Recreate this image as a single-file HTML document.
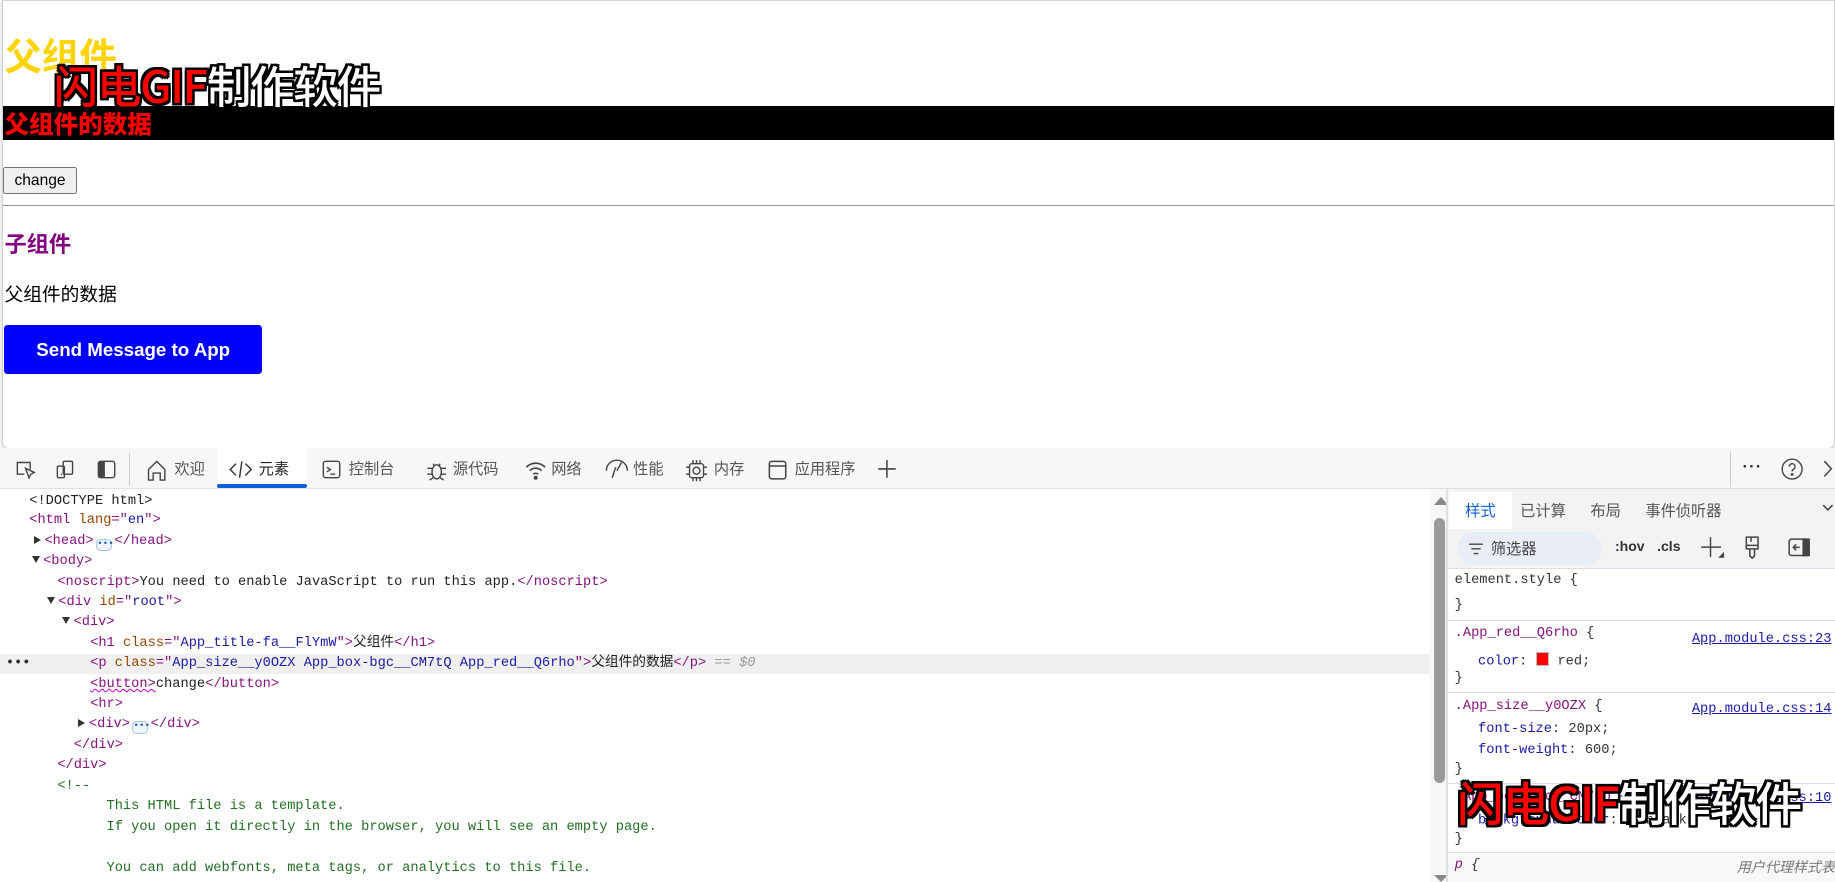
<!DOCTYPE html>
<html><head><meta charset="utf-8">
<style>
html,body{margin:0;padding:0;}
body{width:1568px;height:754px;zoom:1.17028;overflow:hidden;position:relative;background:#f7f7f7;font-family:"Liberation Sans","Noto Sans CJK SC",sans-serif;}
.abs{position:absolute;}
#page{position:absolute;left:2px;top:0;width:1564px;height:382px;background:#fff;border:1px solid #d4d4d4;border-radius:0 0 6px 6px;box-shadow:0 1px 3px rgba(0,0,0,.15);overflow:hidden;}
.wm{position:absolute;font-family:"Noto Sans CJK SC","WenQuanYi Zen Hei",sans-serif;font-weight:500;font-size:38px;line-height:40px;white-space:nowrap;text-shadow:-2px -2px 0 #000,2px -2px 0 #000,-2px 2px 0 #000,2px 2px 0 #000,0 2px 0 #000,0 -2px 0 #000,2px 0 0 #000,-2px 0 0 #000;letter-spacing:-1px;}
.wm .r{color:#f00}.wm .w{color:#fff}
#tb{position:absolute;left:0;top:383px;width:1568px;height:35px;background:#f7f7f7;}
.tab{position:absolute;top:0;height:35px;line-height:35px;font-size:13px;color:#555;font-family:"Noto Sans CJK SC",sans-serif;}
.tab svg{position:absolute;top:9px;}
#el{position:absolute;left:0;top:420px;width:1222px;height:334px;background:#fff;font-family:"Liberation Mono",monospace;font-size:11.7px;}
.ln{position:absolute;white-space:pre;line-height:17px;color:#222;}
.t{color:#881280}.an{color:#994500}.av{color:#1a1aa6}.cm{color:#236e25}
.cj{font-family:"Liberation Mono","Noto Sans CJK SC",monospace;}
.tri{display:inline-block;width:0;height:0;border-left:6px solid #333;border-top:4px solid transparent;border-bottom:4px solid transparent;margin-right:3px;vertical-align:0}
.trid{display:inline-block;width:0;height:0;border-top:6px solid #333;border-left:4px solid transparent;border-right:4px solid transparent;margin-right:3px;vertical-align:1px}
.dots{display:inline-block;width:12px;height:9px;border:1px solid #a8c4e8;border-radius:4px;background:#eef4fc;font-size:8px;line-height:6px;text-align:center;color:#1a5fb4;vertical-align:-1px;margin:0 2px}
#sp{position:absolute;left:1237px;top:418px;width:331px;height:336px;background:#fff;font-family:"Liberation Mono",monospace;font-size:11.7px;}
.rule{position:absolute;left:0;width:331px;border-top:1px solid #d4e0f2;}
.sl{position:absolute;white-space:pre;color:#333;}
.lk{position:absolute;right:3px;color:#1a1aa6;text-decoration:underline;}
</style></head><body>

<div id="page">
  <div class="abs" style="left:1px;top:26px;font-size:32px;font-weight:700;color:#ffd400;font-family:'Noto Sans CJK SC',sans-serif;line-height:40px;">父组件</div>
  <div class="abs" style="left:0;top:90px;width:1564px;height:29px;background:#000;"></div>
  <div class="abs" style="left:1px;top:91px;font-size:21px;font-weight:900;color:#f00;line-height:28px;font-family:'Noto Sans CJK SC',sans-serif;">父组件的数据</div>
  <div class="abs" style="left:0;top:142px;width:61px;height:21px;border:1px solid #767676;border-radius:2px;background:#efefef;font-size:13.3px;line-height:23px;text-align:center;color:#000;">change</div>
  <div class="abs" style="left:0;top:174px;width:1564px;height:0;border-top:1px solid #999;"></div>
  <div class="abs" style="left:1px;top:193px;font-size:19px;font-weight:700;color:#800080;line-height:28px;font-family:'Noto Sans CJK SC',sans-serif;">子组件</div>
  <div class="abs" style="left:1px;top:239px;font-size:16px;color:#000;line-height:22px;font-family:'Noto Sans CJK SC',sans-serif;">父组件的数据</div>
  <div class="abs" style="left:1px;top:277px;width:220px;height:42px;background:#00f;border-radius:3px;color:#fff;font-size:16px;font-weight:700;line-height:42px;text-align:center;">Send Message to App</div>
  <div class="wm" style="left:43px;top:51px;"><span class="r">闪电GIF</span><span class="w">制作软件</span></div>
</div>

<div id="tb">
  <svg class="abs" style="left:13px;top:9px" width="18" height="18" viewBox="0 0 18 18" fill="none" stroke="#444" stroke-width="1.2"><path d="M13 9V3H2v10h6"/><path d="M9 8l3 8 1.5-3 3-1.5z"/></svg>
  <svg class="abs" style="left:47px;top:9px" width="18" height="18" viewBox="0 0 18 18" fill="none" stroke="#444" stroke-width="1.2"><rect x="7" y="2" width="8" height="11" rx="1"/><rect x="2" y="6" width="6" height="10" rx="1"/><path d="M5 13h1"/></svg>
  <svg class="abs" style="left:82px;top:9px" width="18" height="18" viewBox="0 0 18 18" fill="none" stroke="#444" stroke-width="1.2"><rect x="2" y="2" width="14" height="14" rx="2"/><rect x="3" y="3" width="4" height="12" fill="#444"/></svg>
  <div class="abs" style="left:110px;top:4px;width:1px;height:28px;background:#ccc"></div>
  <div class="tab" style="left:124px;"><svg style="left:0" width="20" height="20" viewBox="0 0 20 20" fill="none" stroke="#444" stroke-width="1.2"><path d="M3 9l7-7 7 7v9h-4v-6H7v6H3z"/></svg><span style="margin-left:25px">欢迎</span></div>
  <div class="abs" style="left:185px;top:0;width:77px;height:35px;background:#fff;"></div>
  <div class="abs" style="left:185px;top:31px;width:77px;height:3px;background:#0f5fd7;border-radius:2px"></div>
  <div class="tab" style="left:196px;color:#222"><svg style="left:0" width="20" height="18" viewBox="0 0 20 18" fill="none" stroke="#333" stroke-width="1.2"><path d="M6 4L1 9l5 5M14 4l5 5-5 5M11 2L9 16"/></svg><span style="margin-left:25px">元素</span></div>
  <div class="tab" style="left:274px;"><svg style="left:0" width="18" height="18" viewBox="0 0 18 18" fill="none" stroke="#444" stroke-width="1.2"><rect x="2" y="2" width="14" height="14" rx="2"/><path d="M5 7l3 2-3 2M8 13h4"/></svg><span style="margin-left:24px">控制台</span></div>
  <div class="tab" style="left:363px;"><svg style="left:0" width="20" height="20" viewBox="0 0 20 20" fill="none" stroke="#444" stroke-width="1.2"><ellipse cx="10" cy="11" rx="4" ry="6"/><path d="M7 4l1 2M13 4l-1 2M2 8h4M2 13h4M14 8h4M14 13h4M4 18l3-2M16 18l-3-2"/></svg><span style="margin-left:24px">源代码</span></div>
  <div class="tab" style="left:448px;"><svg style="left:0" width="20" height="18" viewBox="0 0 20 18" fill="none" stroke="#444" stroke-width="1.4"><path d="M2 7a11 11 0 0 1 16 0M5 10a7 7 0 0 1 10 0M8 13a3 3 0 0 1 4 0"/><circle cx="10" cy="16" r="1" fill="#444"/></svg><span style="margin-left:23px">网络</span></div>
  <div class="tab" style="left:516px;"><svg style="left:0" width="22" height="18" viewBox="0 0 22 18" fill="none" stroke="#444" stroke-width="1.2"><path d="M2 10a9 9 0 0 1 18 0"/><path d="M11 10l4-7"/><path d="M7 16l3-9"/></svg><span style="margin-left:25px">性能</span></div>
  <div class="tab" style="left:586px;"><svg style="left:0" width="18" height="20" viewBox="0 0 18 20" fill="none" stroke="#444" stroke-width="1.2"><rect x="3" y="4" width="12" height="12" rx="2"/><circle cx="9" cy="10" r="3"/><path d="M6 1v3M9 1v3M12 1v3M6 16v3M9 16v3M12 16v3M0 7h3M0 13h3M15 7h3M15 13h3"/></svg><span style="margin-left:24px">内存</span></div>
  <div class="tab" style="left:655px;"><svg style="left:0" width="18" height="18" viewBox="0 0 18 18" fill="none" stroke="#444" stroke-width="1.3"><rect x="2" y="2" width="14" height="15" rx="2"/><path d="M2 6h14"/></svg><span style="margin-left:24px">应用程序</span></div>
  <svg class="abs" style="left:749px;top:9px" width="17" height="17" viewBox="0 0 17 17" stroke="#444" stroke-width="1.3"><path d="M8.5 1v15M1 8.5h15"/></svg>
  <div class="abs" style="left:1478px;top:2px;width:1px;height:31px;background:#ccc"></div>
  <div class="abs" style="left:1489px;top:8px;font-size:14px;color:#333;letter-spacing:1px;font-weight:700">···</div>
  <svg class="abs" style="left:1522px;top:8px" width="19" height="19" viewBox="0 0 19 19" fill="none" stroke="#444" stroke-width="1.2"><circle cx="9.5" cy="9.5" r="8.5"/><path d="M7 7.5a2.5 2.5 0 1 1 3.5 2.2c-.8.4-1 1-1 1.8"/><circle cx="9.5" cy="14" r=".6" fill="#444"/></svg>
  <svg class="abs" style="left:1557px;top:10px" width="10" height="15" viewBox="0 0 10 15" fill="none" stroke="#444" stroke-width="1.3"><path d="M2 1l6 6.5L2 14"/></svg>
</div>
<div class="abs" style="left:0;top:417px;width:1568px;height:1px;background:#e0e0e0"></div>
<div class="abs" style="left:0;top:418px;width:1222px;height:2px;background:#fff"></div>

<div id="el">
  <div class="abs" style="left:0;top:139px;width:1222px;height:17px;background:#f0f0f0"></div>
  <div class="ln" style="left:25px;top:0px">&lt;!DOCTYPE html&gt;</div>
  <div class="ln" style="left:25px;top:17px"><span class="t">&lt;html </span><span class="an">lang</span><span class="t">="</span><span class="av">en</span><span class="t">"&gt;</span></div>
  <div class="ln" style="left:29px;top:35px"><span class="tri"></span><span class="t">&lt;head&gt;</span><span class="dots">•••</span><span class="t">&lt;/head&gt;</span></div>
  <div class="ln" style="left:27px;top:52px"><span class="trid"></span><span class="t">&lt;body&gt;</span></div>
  <div class="ln" style="left:49px;top:70px"><span class="t">&lt;noscript&gt;</span>You need to enable JavaScript to run this app.<span class="t">&lt;/noscript&gt;</span></div>
  <div class="ln" style="left:40px;top:87px"><span class="trid"></span><span class="t">&lt;div </span><span class="an">id</span><span class="t">="</span><span class="av">root</span><span class="t">"&gt;</span></div>
  <div class="ln" style="left:53px;top:104px"><span class="trid"></span><span class="t">&lt;div&gt;</span></div>
  <div class="ln cj" style="left:77px;top:122px"><span class="t">&lt;h1 </span><span class="an">class</span><span class="t">="</span><span class="av">App_title-fa__FlYmW</span><span class="t">"&gt;</span>父组件<span class="t">&lt;/h1&gt;</span></div>
  <div class="ln" style="left:5px;top:139px;font-weight:700;color:#333">•••</div>
  <div class="ln cj" style="left:77px;top:139px"><span class="t">&lt;p </span><span class="an">class</span><span class="t">="</span><span class="av">App_size__y0OZX App_box-bgc__CM7tQ App_red__Q6rho</span><span class="t">"&gt;</span>父组件的数据<span class="t">&lt;/p&gt;</span> <span style="color:#999;font-style:italic">== $0</span></div>
  <div class="ln" style="left:77px;top:157px"><span class="t" style="text-decoration:underline wavy #c0c;text-decoration-thickness:1px">&lt;button&gt;</span>change<span class="t">&lt;/button&gt;</span></div>
  <div class="ln" style="left:77px;top:174px"><span class="t">&lt;hr&gt;</span></div>
  <div class="ln" style="left:67px;top:191px"><span class="tri"></span><span class="t">&lt;div&gt;</span><span class="dots">•••</span><span class="t">&lt;/div&gt;</span></div>
  <div class="ln" style="left:63px;top:209px"><span class="t">&lt;/div&gt;</span></div>
  <div class="ln" style="left:49px;top:226px"><span class="t">&lt;/div&gt;</span></div>
  <div class="ln cm" style="left:49px;top:244px">&lt;!--</div>
  <div class="ln cm" style="left:91px;top:261px">This HTML file is a template.</div>
  <div class="ln cm" style="left:91px;top:279px">If you open it directly in the browser, you will see an empty page.</div>
  <div class="ln cm" style="left:91px;top:314px">You can add webfonts, meta tags, or analytics to this file.</div>
</div>

<div class="abs" style="left:1222px;top:418px;width:15px;height:336px;background:#f7f7f7"></div>
<div class="abs" style="left:1225px;top:425px;width:0;height:0;border-left:6px solid transparent;border-right:6px solid transparent;border-bottom:7px solid #888"></div>
<div class="abs" style="left:1225px;top:443px;width:10px;height:226px;background:#9a9a9a;border-radius:5px"></div>
<div class="abs" style="left:1225px;top:748px;width:0;height:0;border-left:6px solid transparent;border-right:6px solid transparent;border-top:6px solid #888"></div>

<div id="sp">
  <div class="abs" style="left:0;top:0;width:331px;height:34px;background:#f3f3f3"></div>
  <div class="abs" style="left:1px;top:2px;width:54px;height:32px;background:#fff"></div>
  <div class="abs" style="left:15px;top:8px;font-size:13px;color:#0f5fd7;font-family:'Noto Sans CJK SC',sans-serif">样式</div>
  <div class="abs" style="left:62px;top:8px;font-size:13px;color:#555;font-family:'Noto Sans CJK SC',sans-serif">已计算</div>
  <div class="abs" style="left:122px;top:8px;font-size:13px;color:#555;font-family:'Noto Sans CJK SC',sans-serif">布局</div>
  <div class="abs" style="left:169px;top:8px;font-size:13px;color:#555;font-family:'Noto Sans CJK SC',sans-serif">事件侦听器</div>
  <svg class="abs" style="left:320px;top:13px" width="10" height="7" viewBox="0 0 10 7" fill="none" stroke="#333" stroke-width="1.2"><path d="M1 1l4 4 4-4"/></svg>
  <div class="abs" style="left:0;top:34px;width:331px;height:33px;background:#f3f3f3;border-bottom:1px solid #d4e0f2"></div>
  <div class="abs" style="left:8px;top:37px;width:124px;height:28px;background:#e9eef6;border-radius:14px"></div>
  <svg class="abs" style="left:18px;top:46px" width="12" height="10" viewBox="0 0 12 10" stroke="#444" stroke-width="1.2"><path d="M0 1h12M2 5h8M4 9h4"/></svg>
  <div class="abs" style="left:37px;top:41px;font-size:13px;color:#444;font-family:'Noto Sans CJK SC',sans-serif">筛选器</div>
  <div class="abs" style="left:143px;top:42px;font-size:12px;font-weight:700;color:#333;font-family:'Liberation Sans',sans-serif">:hov</div>
  <div class="abs" style="left:179px;top:42px;font-size:12px;font-weight:700;color:#333;font-family:'Liberation Sans',sans-serif">.cls</div>
  <svg class="abs" style="left:216px;top:40px" width="22" height="22" viewBox="0 0 22 22" stroke="#444" stroke-width="1.2" fill="none"><path d="M9 1v17M1 9.5h17"/><path d="M17 18h3v-3z" fill="#444"/></svg>
  <svg class="abs" style="left:253px;top:40px" width="14" height="20" viewBox="0 0 14 20" fill="none" stroke="#444" stroke-width="1.3"><path d="M2 1h10v10H2zM2 8h10M5 11v6l2 2 2-2v-6M6 1v4"/></svg>
  <svg class="abs" style="left:291px;top:42px" width="19" height="16" viewBox="0 0 19 16" fill="none" stroke="#444" stroke-width="1.3"><rect x="1" y="1" width="17" height="14" rx="2"/><rect x="13" y="1" width="5" height="14" fill="#444"/><path d="M10 8H5M7 5.5L4.5 8 7 10.5"/></svg>

  <div class="sl" style="left:6px;top:72px">element.style {</div>
  <div class="sl" style="left:6px;top:93px">}</div>
  <div class="rule" style="top:112px"></div>
  <div class="sl" style="left:6px;top:117px"><span style="color:#881280">.App_red__Q6rho</span> {</div>
  <div class="lk" style="top:122px">App.module.css:23</div>
  <div class="sl" style="left:26px;top:139px"><span style="color:#1a1aa6">color</span>: <span style="display:inline-block;width:10px;height:10px;background:#f00;border:1px solid #bbb;vertical-align:-1px"></span> red;</div>
  <div class="sl" style="left:6px;top:155px">}</div>
  <div class="rule" style="top:173px"></div>
  <div class="sl" style="left:6px;top:179px"><span style="color:#881280">.App_size__y0OZX</span> {</div>
  <div class="lk" style="top:182px">App.module.css:14</div>
  <div class="sl" style="left:26px;top:199px"><span style="color:#1a1aa6">font-size</span>: 20px;</div>
  <div class="sl" style="left:26px;top:217px"><span style="color:#1a1aa6">font-weight</span>: 600;</div>
  <div class="sl" style="left:6px;top:233px">}</div>
  <div class="rule" style="top:251px"></div>
  <div class="sl" style="left:6px;top:257px"><span style="color:#881280">.App_box-bgc__CM7tQ</span> {</div>
  <div class="lk" style="top:258px">App.module.css:10</div>
  <div class="sl" style="left:26px;top:277px"><span style="color:#1a1aa6">background-color</span>: <span style="display:inline-block;width:10px;height:10px;background:#000;vertical-align:-1px"></span> black;</div>
  <div class="sl" style="left:6px;top:293px">}</div>
  <div class="rule" style="top:310px"></div>
  <div class="abs" style="left:0;top:311px;width:331px;height:25px;background:#f8f8f8"></div>
  <div class="sl" style="left:6px;top:315px;font-style:italic"><span style="color:#881280">p</span> {</div>
  <div class="abs" style="right:0;top:314px;font-size:12px;font-style:italic;color:#777;font-family:'Noto Sans CJK SC',sans-serif">用户代理样式表</div>
  <div class="wm" style="left:8px;top:245px;font-size:40px;line-height:44px"><span class="r">闪电GIF</span><span class="w">制作软件</span></div>
</div>
<div class="abs" style="left:1236px;top:418px;width:1px;height:336px;background:#e0e0e0"></div>
</body></html>
